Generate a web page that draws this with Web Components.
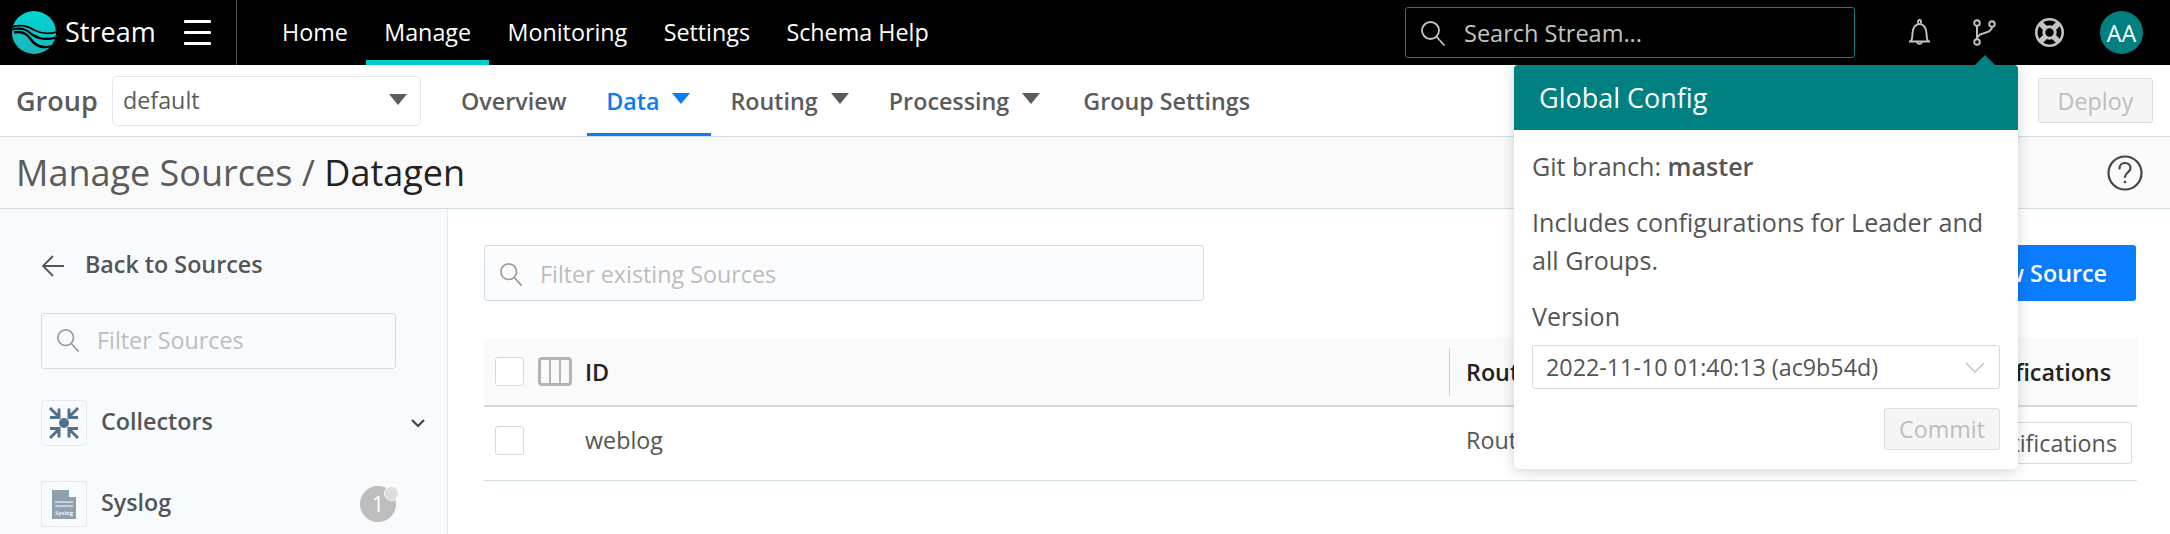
<!DOCTYPE html>
<html><head><meta charset="utf-8">
<style>
html,body{margin:0;padding:0;background:#fff;}
body{width:2170px;height:534px;overflow:hidden;font-family:"Open Sans",sans-serif;position:relative;}
</style></head><body>
<app-topbar></app-topbar>
<app-subnav></app-subnav>
<app-title></app-title>
<app-content></app-content>
<config-popover></config-popover>
<script>
const F='font-family:"Open Sans",sans-serif;';
const searchIcon=(c,s=26)=>`<svg width="${s}" height="${s}" viewBox="0 0 26 26" fill="none" stroke="${c}" stroke-width="1.8" stroke-linecap="round"><circle cx="10.5" cy="10.5" r="8.5"/><path d="M16.8 17l7.2 8"/></svg>`;
function def(name,css,html){
  customElements.define(name,class extends HTMLElement{
    constructor(){super();const r=this.attachShadow({mode:'open'});
      const h=typeof html==='function'?html(this):html;
      r.innerHTML=`<style>:host{display:block;${F}box-sizing:border-box}*{box-sizing:border-box}${css}</style>${h}`;}
  });
}
def('nav-item',`
:host{display:flex;align-items:center;height:65px;padding:3px 18.200px 0;color:#fff;font-size:23.300px;border-bottom:5px solid transparent}
:host([active]){border-bottom-color:#00cccc}
`,`<slot></slot>`);
def('app-topbar',`
:host{display:flex;align-items:center;height:65px;background:#000;color:#fff}
.brand{display:flex;align-items:center;width:237px;height:65px;padding-left:12px;border-right:1px solid #555;flex:none}
.brand span{font-size:27px;margin-left:9px;margin-top:-3px;line-height:1;width:120px}
.brand .menu{display:flex;flex-direction:column;gap:8px;width:27px;margin-left:-1px}
.brand .menu i{display:block;height:3px;background:#fff;border-radius:1px}
nav{display:flex;margin-left:26.800px}
.search{margin-left:auto;width:450px;height:51px;border:1px solid #0f7f7f;border-radius:3px;display:flex;align-items:center;padding-left:14px;gap:18px;color:#c4c4c4;font-size:23.500px}
.icons{display:flex;align-items:center;margin-left:54px;margin-right:27px}
.icons svg{display:block;flex:none}
.av{width:43px;height:43px;border-radius:50%;background:#008080;color:#fff;display:flex;align-items:center;justify-content:center;font-size:23.300px;margin-left:36px}
`,`
<div class="brand">
<svg width="44" height="43" viewBox="0 0 44 43"><defs><linearGradient id="lg" x1="0" y1="0" x2="0" y2="1"><stop offset="0" stop-color="#00d6d6"/><stop offset="1" stop-color="#1fb4b8"/></linearGradient><clipPath id="lc"><ellipse cx="22" cy="21.5" rx="22" ry="21.5"/></clipPath></defs>
<ellipse cx="22" cy="21.5" rx="22" ry="21.5" fill="url(#lg)"/>
<g clip-path="url(#lc)" fill="none" stroke="#000"><path d="M0 16c9-3 16-1 22 3 6 3 13 5 22 2" stroke-width="1.8"/><path d="M0 18.5c10-2.500 15 0 20 5 6 4 14 6 24 3" stroke-width="2.2"/><path d="M2 21.500c8-2 13 1 17 7 4 6 12 10 22 6" stroke-width="2.400"/></g></svg>
<span>Stream</span>
<div class="menu"><i></i><i></i><i></i></div>
</div>
<nav><nav-item>Home</nav-item><nav-item active>Manage</nav-item><nav-item>Monitoring</nav-item><nav-item>Settings</nav-item><nav-item>Schema Help</nav-item></nav>
<div class="search">${searchIcon('#c4c4c4')}<span>Search Stream...</span></div>
<div class="icons">
<svg width="21" height="29" viewBox="1.500 0 21 29" fill="none" stroke="#c4c4c4" stroke-width="1.900" stroke-linejoin="round"><path d="M1 23.500h22M3.500 23.500c1-2 1.500-4 1.500-8 0-5.500 3-9.500 7-9.500s7 4 7 9.500c0 4 .5 6 1.500 8"/><path d="M10.500 5.500V3.500a1.500 1.500 0 0 1 3 0v2"/><path d="M9.500 24a2.600 2.600 0 0 0 5 0"/></svg>
<svg style="margin-left:42px" width="24" height="27" viewBox="0 0 24 27" fill="none" stroke="#c4c4c4" stroke-width="1.900"><circle cx="5" cy="4" r="2.800"/><circle cx="20" cy="5" r="2.800"/><circle cx="5" cy="23" r="2.800"/><path d="M5 7v13M5 18.500l3-3 9-3 2.500-2.500 .5-2.500"/></svg>
<svg style="margin-left:39px" width="29" height="29" viewBox="0 0 29 29" fill="none"><circle cx="14.500" cy="14.500" r="13.200" stroke="#c4c4c4" stroke-width="2.600"/><circle cx="14.500" cy="14.500" r="5.700" stroke="#c4c4c4" stroke-width="3"/><path d="M5.500 5.500l5 5M23.500 5.500l-5 5M5.500 23.500l5-5M23.500 23.500l-5-5" stroke="#c4c4c4" stroke-width="5.500"/></svg>
<div class="av">AA</div>
</div>`);
def('sub-tab',`
:host{display:flex;align-items:center;gap:13px;height:71px;padding:3px 19px 0;font-size:23.300px;font-weight:600;color:#5b5b5b;border-bottom:3px solid transparent}
:host([active]){color:#0a7cf5;border-bottom-color:#0a7cf5}
:host([caret]){padding-right:21px}
:host([wide]){padding-right:20.500px}
i{display:none;width:0;height:0;border-left:9px solid transparent;border-right:9px solid transparent;border-top:11px solid currentColor;margin-top:-5px}
:host([caret]) i{display:block}
`,`<slot></slot><i></i>`);
def('app-subnav',`
:host{display:flex;align-items:center;height:72px;background:#fff;border-bottom:1px solid #cfdce4;position:relative}
.g{font-size:27px;font-weight:600;color:#5b5b5b;margin-left:16px;width:96px;flex:none}
.sel{width:309px;height:50px;border:1px solid #e4e8ea;border-radius:5px;display:flex;align-items:center;justify-content:space-between;padding:0 13px 2px 10px;font-size:23.300px;color:#5b5b5b;flex:none}
.sel i{width:0;height:0;border-left:9px solid transparent;border-right:9px solid transparent;border-top:11px solid #5b5b5b}
.tabs{display:flex;margin-left:21px}
.gs{margin-left:3px}
button{margin-left:auto;margin-right:17px;width:115px;height:45px;border:1px solid #d8dfe3;background:#f5f5f5;border-radius:3px;color:#bdbdbd;font:23.300px "Open Sans",sans-serif;padding:0}
`,`<div class="g">Group</div><div class="sel"><span>default</span><i></i></div>
<div class="tabs"><sub-tab wide>Overview</sub-tab><sub-tab active caret>Data</sub-tab><sub-tab caret>Routing</sub-tab><sub-tab caret>Processing</sub-tab><sub-tab class="gs">Group Settings</sub-tab></div>
<button>Deploy</button>`);
def('app-title',`
:host{display:flex;align-items:center;justify-content:space-between;height:72px;background:#fafafa;border-bottom:1px solid #cfdce4;padding:0 27px 0 16px}
h1{margin:0;font-weight:400;font-size:36px;color:#5b5b5b}
h1 b{font-weight:400;color:#222}
svg{display:block}
`,`<h1>Manage Sources / <b>Datagen</b></h1>
<svg width="36" height="36" viewBox="0 0 36 36" fill="none" stroke="#444" stroke-width="2.200"><circle cx="18" cy="18" r="16.500"/><path d="M12.500 13.500c0-3.500 2.500-5.500 5.500-5.500s5.500 2 5.500 5c0 4.500-5.500 4.500-5.500 9" stroke-linecap="round"/><circle cx="18" cy="27" r="1.300" fill="#444" stroke="none"/></svg>`);
def('filter-box',`
:host{display:flex;align-items:center;height:56px;border:1px solid #cfdce4;border-radius:3px;padding-left:14px;gap:17px;color:#bdbdbd;font-size:23.300px}
svg{display:block;flex:none}
`,`${searchIcon('#9a9a9a',24)}<slot></slot>`);
def('src-tile',`
:host{display:flex;align-items:center;height:46px;color:#555;font-size:23.300px;font-weight:600;position:relative}
.t{width:46px;height:46px;border:1px solid #e5e9ec;border-radius:4px;display:flex;align-items:center;justify-content:center;margin-right:14px;flex:none}
.l{display:block;margin-top:-4px}
::slotted(svg){display:block}
`,`<div class="t"><slot name="icon"></slot></div><div class="l"><slot></slot></div><slot name="end"></slot>`);
def('app-sidebar',`
:host{width:448px;flex:none;background:#f8fbfd;border-right:1px solid #e2e9ed;padding:41px 0 0 41px;height:100%}
.back{display:flex;align-items:center;height:32px;gap:20px;font-size:23.300px;font-weight:600;color:#555}
.back span{margin-top:-4px}
filter-box{width:355px;margin-top:31px;background:#fff0;padding-bottom:2px}
.c{margin-top:31px;width:384px;position:relative}
.chev{margin-left:auto;display:block}
.s{margin-top:35px;width:355px}
.badge{margin-left:auto;width:36px;height:36px;border-radius:50%;background:#bdbdbd;color:#fff;font-weight:400;font-size:21px;display:flex;align-items:center;justify-content:center;position:relative}
.badge i{position:absolute;right:-3px;top:0;width:15px;height:15px;border-radius:50%;background:#dcdcdc;border:1.500px solid #fff}
`,`<div class="back"><svg width="24" height="24" viewBox="0 0 24 24" fill="none" stroke="#555" stroke-width="1.800"><path d="M23 12H2M12 2L2 12l10 10"/></svg><span>Back to Sources</span></div>
<filter-box>Filter Sources</filter-box>
<src-tile class="c"><svg slot="icon" width="34" height="34" viewBox="0 0 34 34" fill="none" stroke="#54708a" stroke-width="3"><circle cx="17" cy="17" r="5" fill="#54708a" stroke="none"/><path d="M3 2l9 9M3 11.500h9V2.500M31 2l-9 9M31 11.500h-9V2.500M3 32l9-9M3 22.500h9v9M31 32l-9-9M31 22.500h-9v9"/></svg>Collectors<svg slot="end" class="chev" width="14" height="9" viewBox="0 0 14 9" fill="none" stroke="#444" stroke-width="2.200"><path d="M1 1l6 6 6-6"/></svg></src-tile>
<src-tile class="s"><svg slot="icon" width="24" height="29" viewBox="0 0 24 29"><path d="M0 0h17l7 7v22H0z" fill="#8fa0ae"/><path d="M17 0l7 7h-7z" fill="#fff"/><path d="M17.500 0.500l6 6" stroke="#f8fbfd"/><path d="M3 12h18M3 16h18" stroke="#fff" stroke-width="1"/><text x="12" y="25" font-size="6" fill="#fff" text-anchor="middle" font-family="Open Sans">Syslog</text></svg>Syslog<div slot="end" class="badge">1<i></i></div></src-tile>`);
def('check-box',`
:host{display:block;width:29px;height:29px;border:1px solid #cfdce4;border-radius:3px;background:#fff;flex:none}
`,``);
def('app-main',`
:host{flex:1;padding:36px 33px 0 36px;min-width:0}
.top{display:flex;justify-content:space-between}
filter-box{width:720px;background:#fbfcfd;padding-top:1px}
.new{width:250px;height:56px;margin-right:1px;background:#0a7cff;border:0;border-radius:3px;color:#fff;font:600 23.300px "Open Sans",sans-serif;text-align:right;padding:0 29px 0 0}
.h,.r{display:grid;grid-template-columns:101px 864px 1fr;align-items:center}
.h{margin-top:37px;height:69px;background:#fafafa;border-bottom:2px solid #d9d9d9;font-size:23.300px;font-weight:600;color:#222}
.r{height:74px;border-bottom:1px solid #cfdce4;font-size:23.300px;color:#555;padding-bottom:7px}
.c0{display:flex;align-items:center;padding-left:11px;gap:14px}
.rout{padding-left:16px;border-left:1px solid #d0d0d0;height:48px;display:flex;align-items:center}
.rr{padding-left:17px}
.end{display:flex;justify-content:flex-end;padding-right:26px}
.r .end{padding-right:5px}
.nb{height:42px;margin-top:5px;border:1px solid #d4dde3;border-radius:3px;padding:0 14px;display:flex;align-items:center;color:#555;background:#fff}
.cols{display:flex}
.rw{display:grid;grid-template-columns:1fr 300px;align-items:center}
`,`<div class="top"><filter-box>Filter existing Sources</filter-box><button class="new">New Source</button></div>
<div class="h"><div class="c0"><check-box></check-box><svg class="cols" width="34" height="29" viewBox="0 0 34 29" fill="none" stroke="#b4b4b4" stroke-width="3"><rect x="1.500" y="1.500" width="31" height="26" rx="2.500"/><path d="M12 2v25M22 2v25" stroke-width="2"/></svg></div><div>ID</div><div class="rw"><div class="rout">Routes</div><div class="end">Notifications</div></div></div>
<div class="r"><div class="c0"><check-box></check-box></div><div>weblog</div><div class="rw"><div class="rr">Routes</div><div class="end"><div class="nb">Notifications</div></div></div></div>`);
def('app-content',`
:host{display:flex;height:326px;overflow:hidden}
`,`<app-sidebar></app-sidebar><app-main></app-main>`);
def('config-popover',`
:host{position:absolute;left:1514px;top:65px;width:504px;height:404px;background:#fff;border-radius:0 0 5px 5px;box-shadow:0 2px 14px rgba(0,0,0,.18);color:#555;font-size:25.100px}
.arrow{position:absolute;top:-10px;left:461px;width:0;height:0;border-left:10px solid transparent;border-right:10px solid transparent;border-bottom:10px solid #008080}
header{height:65px;background:#008080;color:#fff;font-size:27px;padding-left:25px;display:flex;align-items:center;border-radius:4px 4px 0 0}
main{padding:0 18px}
p{margin:0}
.g{padding-top:22px;line-height:29px}
.g b{font-weight:600}
.i{margin-top:22px;line-height:38px}
.v{margin-top:22px;line-height:30px}
.s{margin-top:14px;height:44px;border:1px solid #cfdce4;border-radius:3px;display:flex;align-items:center;justify-content:space-between;padding:0 14px 0 13px;font-size:23.300px}
.f{display:flex;justify-content:flex-end;margin-top:19px}
button{width:116px;height:42px;border:1px solid #d8dfe3;background:#f5f5f5;border-radius:3px;color:#bdbdbd;font:23.300px "Open Sans",sans-serif;padding:0}
`,`<div class="arrow"></div><header>Global Config</header>
<main><p class="g">Git branch: <b>master</b></p><p class="i">Includes configurations for Leader and all Groups.</p><p class="v">Version</p>
<div class="s"><span>2022-11-10 01:40:13 (ac9b54d)</span><svg width="20" height="11" viewBox="0 0 20 11" fill="none" stroke="#bdc6cc" stroke-width="1.500"><path d="M1 1l9 9 9-9"/></svg></div>
<div class="f"><button>Commit</button></div></main>`);
</script>
</body></html>
